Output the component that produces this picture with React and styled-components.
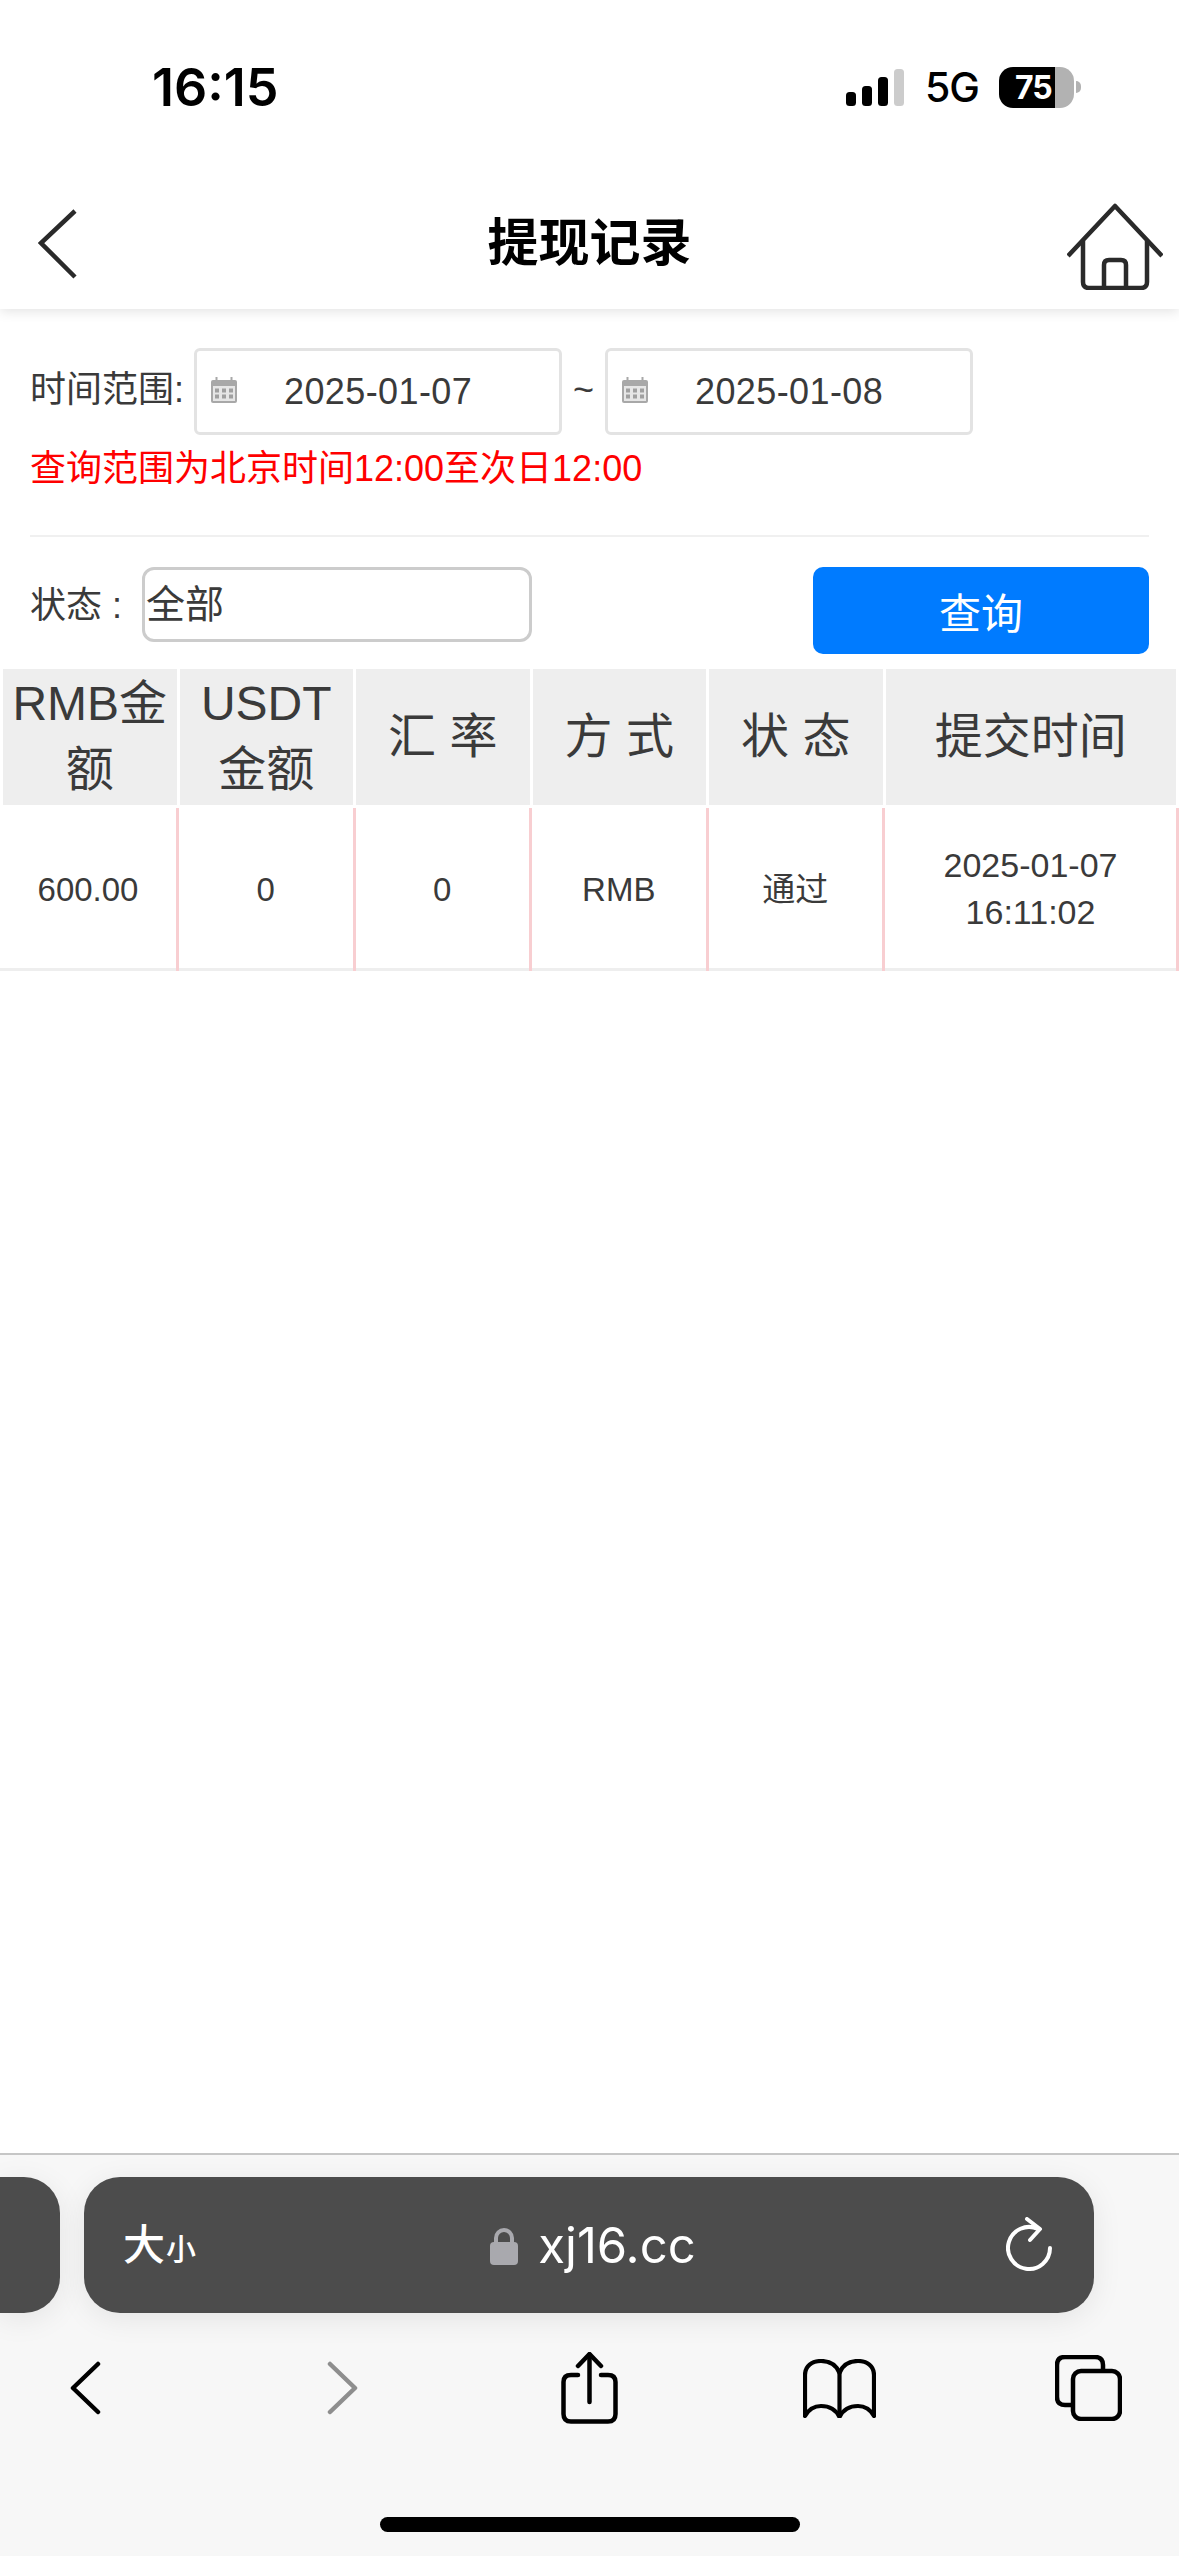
import React from "react";
import styled, { createGlobalStyle } from "styled-components";

const Global = createGlobalStyle`
  html, body { margin: 0; padding: 0; background: #fff; }
  body { font-family: "Liberation Sans", "Noto Sans CJK SC", sans-serif; color: #333; }
  * { box-sizing: border-box; }
`;

const Page = styled.div`
  width: 1179px;
  height: 2556px;
  display: flex;
  flex-direction: column;
  overflow: hidden;
  background: #fff;
`;

/* status bar */
const StatusBar = styled.div`
  height: 175px;
  flex: none;
  display: flex;
  align-items: center;
  justify-content: space-between;
  padding: 0 105px 0 152px;
  color: #000;
`;
const Clock = styled.div`
  font-family: Inter, "Liberation Sans", sans-serif;
  font-weight: 600;
  font-size: 52px;
  letter-spacing: 0;
  line-height: 1;
`;
const StatusRight = styled.div`
  display: flex;
  align-items: center;
  gap: 21px;
`;
const SignalIcon = styled.svg`
  width: 58px;
  height: 37px;
  display: block;
`;
const Network = styled.div`
  font-family: Inter, "Liberation Sans", sans-serif;
  font-size: 41px;
  font-weight: 500;
  line-height: 1;
  width: 53px;
  letter-spacing: -1px;
`;
const Battery = styled.div`
  position: relative;
  width: 75px;
  height: 41px;
  border-radius: 14px;
  background: linear-gradient(90deg, #000 0, #000 56px, #b2b2b2 56px, #b2b2b2 100%);
  color: #fff;
  font-family: Inter, "Liberation Sans", sans-serif;
  font-weight: 700;
  font-size: 32px;
  line-height: 41px;
  padding-left: 16px;
  letter-spacing: -1px;
  &::after {
    content: "";
    position: absolute;
    left: 77px;
    top: 14px;
    width: 5px;
    height: 12px;
    border-radius: 0 6px 6px 0;
    background: #b2b2b2;
  }
`;

/* page header */
const Header = styled.header`
  height: 134px;
  flex: none;
  display: grid;
  grid-template-columns: 1fr auto 1fr;
  align-items: center;
  padding: 0 16px;
  background: #fff;
  box-shadow: 0 2px 12px rgba(0, 0, 0, 0.12);
  clip-path: inset(0 0 -30px 0);
  position: relative;
`;
const BackIcon = styled.svg`
  width: 40px;
  height: 70px;
  margin: 4px 0 0 22px;
  display: block;
`;
const Title = styled.h1`
  margin: 3px 0 0;
  font-size: 51px;
  font-weight: 700;
  color: #000;
  line-height: 60px;
`;
const HomeIcon = styled.svg`
  justify-self: end;
  width: 96px;
  height: 87px;
  margin-top: 9px;
  display: block;
`;

/* filters */
const Filters = styled.section`
  padding: 39px 30px 0;
  flex: none;
`;
const DateRow = styled.div`
  display: flex;
  align-items: center;
`;
const FieldLabel = styled.span`
  font-size: 36px;
  line-height: 40px;
  color: #3a3a3a;
  white-space: nowrap;
`;
const RangeLabel = styled(FieldLabel)`
  width: 164px;
  margin-top: -3px;
`;
const DateBox = styled.div`
  width: 368px;
  height: 87px;
  border: 3px solid #e3e3e3;
  border-radius: 6px;
  display: flex;
  align-items: center;
  padding-left: 14px;
  font-size: 36px;
  letter-spacing: 0.4px;
  color: #3a3a3a;
  background: #fff;
`;
const CalendarIcon = styled.svg`
  width: 26px;
  height: 26px;
  margin: -4px 47px 0 0;
  flex: none;
  display: block;
`;
const Tilde = styled.span`
  width: 43px;
  text-align: center;
  font-size: 36px;
  color: #3a3a3a;
  margin-top: -4px;
`;
const Hint = styled.p`
  margin: 14px 0 0;
  font-size: 36px;
  line-height: 40px;
  color: #f00;
`;
const Divider = styled.hr`
  margin: 46px 0 30px;
  border: 0;
  height: 2px;
  background: #f0f0f0;
`;
const StatusRow = styled.div`
  display: flex;
  align-items: flex-start;
  justify-content: space-between;
`;
const StatusField = styled.div`
  display: flex;
  align-items: center;
  height: 75px;
`;
const StatusLabel = styled(FieldLabel)`
  width: 112px;
  margin-top: 2px;
`;
const SelectBox = styled.div`
  width: 390px;
  height: 75px;
  border: 3px solid #ccc;
  border-radius: 12px;
  padding-left: 1px;
  font-size: 39px;
  line-height: 69px;
  color: #3a3a3a;
  background: #fff;
`;
const QueryButton = styled.button`
  width: 336px;
  height: 87px;
  border: 0;
  border-radius: 10px;
  background: #007bff;
  color: #fff;
  font-family: inherit;
  font-size: 42px;
  padding: 0;
`;

/* table */
const TableHead = styled.div`
  margin-top: 15px;
  height: 136px;
  flex: none;
  display: grid;
  grid-template-columns: repeat(5, 173.5px) 1fr;
  column-gap: 3px;
  padding: 0 3px;
`;
const HeadCell = styled.div`
  background: #eee;
  display: flex;
  align-items: center;
  justify-content: center;
  text-align: center;
  font-size: 48px;
  line-height: 66px;
  color: #3a3a3a;
`;
const TableRow = styled.div`
  margin-top: 3px;
  height: 163px;
  flex: none;
  display: grid;
  grid-template-columns: 179px repeat(4, 176.5px) 1fr;
  box-shadow: inset 0 -3px 0 #eee;
`;
const BodyCell = styled.div`
  border-right: 3px solid #f8ced1;
  display: flex;
  align-items: center;
  justify-content: center;
  text-align: center;
  font-size: ${(p) => (p.$long ? "34px" : "33px")};
  line-height: 47px;
  color: #3a3a3a;
  padding-bottom: 1px;
`;

const Spacer = styled.div`
  flex: 1;
`;

/* browser chrome */
const Chrome = styled.footer`
  height: 403px;
  flex: none;
  background: #f7f7f7;
  border-top: 2px solid #c6c6c6;
  padding-top: 22px;
`;
const PillRow = styled.div`
  display: flex;
  gap: 24px;
  height: 136px;
`;
const SidePill = styled.div`
  width: 60px;
  background: #4c4c4c;
  border-radius: 0 36px 36px 0;
  box-shadow: 0 6px 30px rgba(0, 0, 0, 0.08);
`;
const UrlPill = styled.div`
  width: 1010px;
  background: #4c4c4c;
  border-radius: 36px;
  box-shadow: 0 6px 30px rgba(0, 0, 0, 0.08);
  display: grid;
  grid-template-columns: 1fr auto 1fr;
  align-items: center;
  padding: 0 42px 0 39px;
  color: #fff;
`;
const TextSize = styled.div`
  display: flex;
  align-items: baseline;
  font-weight: 500;
  font-size: 42px;
  margin-top: 2px;
  line-height: 1;
`;
const SmallChar = styled.span`
  font-size: 30px;
  margin-left: 1px;
`;
const Address = styled.div`
  display: flex;
  align-items: center;
  gap: 20px;
  margin-left: 11px;
  font-family: Inter, "Liberation Sans", sans-serif;
  font-size: 49px;
  line-height: 1;
`;
const LockIcon = styled.svg`
  width: 28px;
  height: 38px;
  display: block;
  margin-top: 2px;
`;
const ReloadIcon = styled.svg`
  justify-self: end;
  width: 46px;
  height: 54px;
  display: block;
  margin-top: -2px;
`;
const Toolbar = styled.nav`
  margin-top: 39px;
  height: 72px;
  display: grid;
  grid-template-columns: 171px 343px 151px 349px 149px;
  align-items: center;
  justify-items: center;
`;
const ToolIcon = styled.svg`
  display: block;
`;
const HomeIndicator = styled.div`
  width: 420px;
  height: 15px;
  border-radius: 8px;
  background: #000;
  margin: 93px auto 0;
`;

const Calendar = () => (
  <CalendarIcon viewBox="0 0 26 26">
    <rect x="0" y="3" width="26" height="23" rx="2" fill="#a8a8a8" />
    <rect x="4.5" y="0" width="2" height="5" fill="#a8a8a8" />
    <rect x="19.5" y="0" width="2" height="5" fill="#a8a8a8" />
    <rect x="2" y="9" width="22" height="15" fill="#e6e6e6" />
    {[4, 11, 18].flatMap((x) =>
      [11.5, 17.5].map((y) => <rect key={`${x}-${y}`} x={x} y={y} width="4" height="4" fill="#a0a0a0" />)
    )}
  </CalendarIcon>
);

const heads = ["RMB金额", "USDT金额", "汇 率", "方 式", "状 态", "提交时间"];

export default function App() {
  return (
    <Page>
      <Global />
      <StatusBar>
        <Clock>16:15</Clock>
        <StatusRight>
          <SignalIcon viewBox="0 0 58 37">
            <rect x="0" y="23" width="10" height="14" rx="3.5" fill="#000" />
            <rect x="16" y="17" width="10" height="20" rx="3.5" fill="#000" />
            <rect x="32" y="8" width="10" height="29" rx="3.5" fill="#000" />
            <rect x="48" y="0" width="10" height="37" rx="3.5" fill="#ccc" />
          </SignalIcon>
          <Network>5G</Network>
          <Battery>75</Battery>
        </StatusRight>
      </StatusBar>

      <Header>
        <BackIcon viewBox="0 0 40 70" fill="none" stroke="#2a2a2a" strokeWidth="4.5">
          <path d="M37 2 L3 34 L37 68" />
        </BackIcon>
        <Title>提现记录</Title>
        <HomeIcon viewBox="0 0 96 87" fill="none" stroke="#2a2a2a" strokeWidth="4.5" strokeLinejoin="round">
          <path d="M1 53 L48 3 L95 53" />
          <path d="M16 38 V79 Q16 85 22 85 H74 Q80 85 80 79 V38" />
          <path d="M37 85 V62 Q37 57 42 57 H54 Q59 57 59 62 V85" />
        </HomeIcon>
      </Header>

      <Filters>
        <DateRow>
          <RangeLabel>时间范围:</RangeLabel>
          <DateBox>
            <Calendar />
            2025-01-07
          </DateBox>
          <Tilde>~</Tilde>
          <DateBox>
            <Calendar />
            2025-01-08
          </DateBox>
        </DateRow>
        <Hint>查询范围为北京时间12:00至次日12:00</Hint>
        <Divider />
        <StatusRow>
          <StatusField>
            <StatusLabel>状态 :</StatusLabel>
            <SelectBox>全部</SelectBox>
          </StatusField>
          <QueryButton>查询</QueryButton>
        </StatusRow>
      </Filters>

      <TableHead>
        {heads.map((h) => (
          <HeadCell key={h}>{h}</HeadCell>
        ))}
      </TableHead>
      <TableRow>
        <BodyCell>600.00</BodyCell>
        <BodyCell>0</BodyCell>
        <BodyCell>0</BodyCell>
        <BodyCell>RMB</BodyCell>
        <BodyCell>通过</BodyCell>
        <BodyCell $long>
          2025-01-07
          <br />
          16:11:02
        </BodyCell>
      </TableRow>

      <Spacer />

      <Chrome>
        <PillRow>
          <SidePill />
          <UrlPill>
            <TextSize>
              大<SmallChar>小</SmallChar>
            </TextSize>
            <Address>
              <LockIcon viewBox="0 0 28 38">
                <path d="M6 17 V11 a8 8 0 0 1 16 0 V17" fill="none" stroke="#a9a9ae" strokeWidth="4" />
                <rect x="0" y="15" width="28" height="23" rx="4" fill="#a9a9ae" />
              </LockIcon>
              xj16.cc
            </Address>
            <ReloadIcon viewBox="0 0 46 54" fill="none" stroke="#fff" strokeWidth="4" strokeLinecap="round" strokeLinejoin="round">
              <path d="M32 12 A21 21 0 1 0 44 31" />
              <path d="M21 2 L34 12 L24 23" />
            </ReloadIcon>
          </UrlPill>
        </PillRow>
        <Toolbar>
          <ToolIcon width="31" height="54" viewBox="0 0 31 54" fill="none" stroke="#000" strokeWidth="4.5" strokeLinecap="round" strokeLinejoin="round">
            <path d="M28 3 L3 27 L28 51" />
          </ToolIcon>
          <ToolIcon width="31" height="54" viewBox="0 0 31 54" fill="none" stroke="#8e8e8e" strokeWidth="4.5" strokeLinecap="round" strokeLinejoin="round">
            <path d="M3 3 L28 27 L3 51" />
          </ToolIcon>
          <ToolIcon width="57" height="72" viewBox="0 0 57 72" fill="none" stroke="#000" strokeWidth="4.5" strokeLinecap="round" strokeLinejoin="round">
            <path d="M17 23 H10 Q2.5 23 2.5 30 V62 Q2.5 69.5 10 69.5 H47 Q54.5 69.5 54.5 62 V30 Q54.5 23 47 23 H40" />
            <path d="M28.5 3 V50" />
            <path d="M17 14 L28.5 2 L40 14" />
          </ToolIcon>
          <ToolIcon width="73" height="59" viewBox="0 0 73 59" fill="none" stroke="#000" strokeWidth="4.2" strokeLinejoin="round">
            <path d="M36.5 14 C33 5 25 2 18 2 C9 2 2 7 2 16 V57 C6 50 12 47 18 47 C26 47 33 51 36.5 58 C40 51 47 47 55 47 C61 47 67 50 71 57 V16 C71 7 64 2 55 2 C48 2 40 5 36.5 14 Z" />
            <path d="M36.5 14 V58" />
          </ToolIcon>
          <ToolIcon width="67" height="66" viewBox="0 0 67 66" fill="none" stroke="#000" strokeWidth="4.5" strokeLinejoin="round">
            <path d="M17 50 H10 Q2 50 2 42 V10 Q2 2 10 2 H40 Q48 2 48 10 V15" />
            <rect x="18" y="16" width="47" height="48" rx="8" />
          </ToolIcon>
        </Toolbar>
        <HomeIndicator />
      </Chrome>
    </Page>
  );
}
